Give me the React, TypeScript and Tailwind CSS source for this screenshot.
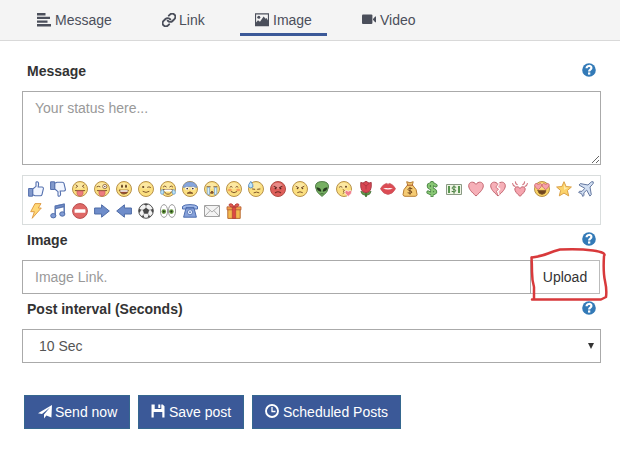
import React from "react";

type Kids = { children?: React.ReactNode };

const Glyph = ({ children }: Kids) => (
  <svg viewBox="0 0 14 14" className="h-[14px] w-[14px] shrink-0" fill="currentColor">{children}</svg>
);

const AlignIcon = () => (
  <Glyph><path d="M0 0h8.5v2.4H0zM0 3.7h13v2.4H0zM0 7.4h10.5v2.4H0zM0 11.1h14v2.4H0z" /></Glyph>
);
const LinkIcon = () => (
  <svg viewBox="1 1 22 22" className="h-[14px] w-[14px] shrink-0" fill="none" stroke="currentColor" strokeWidth="3" strokeLinecap="round" strokeLinejoin="round">
    <path d="M10 13a5 5 0 0 0 7.54.54l3-3a5 5 0 0 0-7.07-7.07l-1.72 1.71" />
    <path d="M14 11a5 5 0 0 0-7.54-.54l-3 3a5 5 0 0 0 7.07 7.07l1.71-1.71" />
  </svg>
);
const PictureIcon = () => (
  <Glyph>
    <path fillRule="evenodd" d="M0 .2h14v13H0zM1.1 1.4v10.6h11.8V1.4z" />
    <circle cx="3.8" cy="4.2" r="1.5" />
    <path d="M1 12.4V9.6L3 7.2l2 1.5L8.6 3.6l2 2.2.9-.7L13 7.6v4.8z" />
  </Glyph>
);
const VideoIcon = () => (
  <Glyph><rect x="0" y="1.5" width="10.4" height="9.5" rx="1" /><path d="M11 6 13.2 3.4h.8v5.8h-.8L11 6.7z" /></Glyph>
);
const SendIcon = () => (
  <Glyph><path d="M14 0 13.4 12.6 8.4 10.4 6 13.5V9.5L12 2.6 4 8.9 0 8.2z" /></Glyph>
);
const SaveIcon = () => (
  <Glyph><path fillRule="evenodd" d="M.5.5h3.2V5h6.6V.5h1.4l1.8 1.8v11.2h-2.2V8H2.7v5.5H.5zM7.3.5h2v3.4h-2z" /></Glyph>
);
const ClockIcon = () => (
  <Glyph>
    <circle cx="7" cy="7" r="6" fill="none" stroke="currentColor" strokeWidth="1.9" />
    <path d="M7 3v4.5h3.5" fill="none" stroke="currentColor" strokeWidth="1.3" />
  </Glyph>
);
const HelpIcon = () => (
  <svg viewBox="0 0 14 14" className="mb-[3px] mr-[5px] h-[14px] w-[14px]">
    <circle cx="7" cy="7" r="6.8" fill="#337ab7" />
    <path d="M4.6 5.3C4.6 2.2 9.5 2.3 9.4 5 9.4 6.7 7.1 6.5 7.1 8.6" fill="none" stroke="#fff" strokeWidth="2.2" />
    <path d="M6 9.4h2.3v2.2H6z" fill="#fff" />
  </svg>
);

const E = ({ children }: Kids) => <svg viewBox="0 0 16 16" className="h-4 w-4">{children}</svg>;

type FaceProps = Kids & { fill?: string; edge?: string };
const Face = ({ children, fill = "#fbdf80", edge = "#b8924c" }: FaceProps) => (
  <E>
    <circle cx="8" cy="8" r="7.5" fill={fill} stroke={edge} />
    <ellipse cx="7.5" cy="4.8" rx="5" ry="3" fill="#fff" opacity=".28" />
    {children}
  </E>
);
type LineProps = { d: string; c?: string; w?: number; f?: string };
const L = ({ d, c = "#80572c", w = 1, f = "none" }: LineProps) => (
  <path d={d} fill={f} stroke={c} strokeWidth={w} strokeLinecap="round" strokeLinejoin="round" />
);
const Thumb = () => (
  <>
    <path d="M.6 7.5h4v7.7h-4z" fill="#8199cc" stroke="#5470ae" />
    <path d="M4.8 8 8 5.3V1.8Q8 .6 9.3.8q1.4.3 1.3 2.1L10.2 6h4q1.4.3 1.2 1.7L14 13.6q-.4 1.2-1.6 1.2H7l-2.2-1z" fill="#f2f6ff" stroke="#5470ae" strokeWidth="1.1" />
  </>
);
const Heart = () => (
  <path d="M8 15C3.5 11 .7 8 .7 4.8.7.5 6 0 8 3.4 10 0 15.3.5 15.3 4.8 15.3 8 12.5 11 8 15z" fill="#f6b0b8" stroke="#c2656f" />
);
const Arrow = () => (
  <path d="M.6 5h7V1.8L15.3 8l-7.7 6.2V11h-7z" fill="#6f8dca" stroke="#4f6ca6" />
);
const Tongue = () => (
  <path d="M5 10h6v2.8q-.4 2.4-3 2.4t-3-2.4z" fill="#ee7b80" stroke="#c45f5c" strokeWidth=".7" />
);

const Emojis = () => (
  <div className="mt-[10px] flex h-[50px] flex-wrap content-start gap-[6px] border border-[#d9dddd] pl-[5px] pt-[5px]">
    <E><Thumb /></E>
    <E><g transform="translate(0 16) scale(1 -1)"><Thumb /></g></E>
    <Face><L d="m4 4 1.7 1.3L4 6.5M12 4l-1.7 1.3L12 6.5M3.3 9.6h9.4" /><Tongue /></Face>
    <Face><L d="M3 5.7q1.5-1 3 0M3.3 9.6h9.4" /><Tongue /><circle cx="10.8" cy="5.5" r="2.1" fill="#fff" stroke="#80572c" strokeWidth=".8" /><circle cx="10.8" cy="5.5" r=".8" fill="#80572c" /></Face>
    <Face><ellipse cx="6" cy="5.3" rx=".9" ry="1.7" fill="#65401d" /><ellipse cx="10" cy="5.3" rx=".9" ry="1.7" fill="#65401d" /><L d="M3.7 9.2h8.6q-.6 3.8-4.3 3.8T3.7 9.2z" f="#9a4934" /><L d="M4.8 10h6.4" c="#fff" w={1.4} /></Face>
    <Face><circle cx="5.2" cy="6" r="1.1" fill="#65401d" /><L d="M9.5 6.2q1.5-1 3 .2M5 10.5q3 2 6 0" /></Face>
    <Face><L d="M3.3 5.8q1.5-2 3 0M9.7 5.8q1.5-2 3 0M3.7 8.5h8.6q-1 4.7-4.3 4.7T3.7 8.5z" /><L d="M5 9.5h6" c="#fff" w={1.9} /><L d="M1.6 8.8Q-.7 13 2 13.2T3.5 9.5zM14.4 8.8q2.3 4.2-.4 4.4T12.5 9.5z" f="#bde3f6" c="#6b9dcc" w={0.8} /></Face>
    <Face><path d="M1 6.4Q2 .9 8 .9t7 5.5Q8 4.6 1 6.4z" fill="#86a5dc" stroke="#6486c2" strokeWidth=".6" /><circle cx="5" cy="7.5" r="1.7" fill="#fff" /><circle cx="11" cy="7.5" r="1.7" fill="#fff" /><circle cx="5.2" cy="7.6" r=".9" fill="#4b3830" /><circle cx="10.8" cy="7.6" r=".9" fill="#4b3830" /><L d="M5.5 12q2.5-2.4 5 0z" f="#98563a" /></Face>
    <Face><L d="M3 5.8h3.2M9.8 5.8H13" /><path d="M3.2 6.6h2.4v7.5L3.2 13zM10.4 6.6h2.4V13l-2.4 1.1z" fill="#d6effc" stroke="#6d9ac8" strokeWidth=".7" /><L d="M6.9 11q1.1-1.8 2.2 0v1.2H6.9z" f="#8a4b35" /></Face>
    <Face><ellipse cx="3.8" cy="9" rx="2" ry="1.3" fill="#f4a060" /><ellipse cx="12.2" cy="9" rx="2" ry="1.3" fill="#f4a060" /><L d="M4 6q1.1-1.5 2.2 0M9.8 6Q10.900 4.500 12 6M5.200 10.700q2.800 2.400 5.600 0" /></Face>
    <Face><L d="m4.500 8 2.200.300M9.600 8.300 12 8M6 11.700q2.500-1.400 5 0" /><path d="M2.800.4Q-.4 4.200.7 6q2 2 4.200 0Q5.600 3.800 2.800.4z" fill="#bde4fb" stroke="#5689bd" strokeWidth=".9" /></Face>
    <Face fill="#df5f5a" edge="#b04d46"><L d="m4 5.300 2.600 1.400M12 5.300 9.400 6.700M5.400 11.700q2.600-1.800 5.200 0" c="#742d27" w={1.1} /><circle cx="5.500" cy="7.400" r=".9" fill="#54211d" /><circle cx="10.500" cy="7.400" r=".9" fill="#54211d" /></Face>
    <Face><L d="m4 5.300 2.600 1.400M12 5.300 9.400 6.700M5.600 11.500q2.400-1.600 4.800 0" /><circle cx="5.500" cy="7.400" r=".8" fill="#65401d" /><circle cx="10.500" cy="7.400" r=".8" fill="#65401d" /></Face>
    <E><path d="M8 .6q6.800 0 6.500 5.500Q14 11.600 8 15.400 2 11.600 1.500 6.100 1.200.6 8 .6z" fill="#77b063" stroke="#527e48" /><path d="M2.500 6.200q5 .4 4.700 4.600-4.200-.6-4.700-4.600zM13.500 6.200q-5 .4-4.700 4.600 4.200-.6 4.700-4.600z" fill="#26391f" /><L d="M6.800 12.800h2.400" c="#315728" w={0.8} /></E>
    <Face><L d="M3.400 6q1.300-1.200 2.600 0" /><circle cx="10" cy="5.700" r="1" fill="#65401d" /><L d="m7 8.500 1.500 1L7 10.500l1.500 1L7 12.500" w={0.8} /><path d="M12.300 15.400C9.300 13 8.600 12 9 10.300q1.400-1.800 3.300 0 1.900-1.800 3.500 0 .4 2-3.500 5.100z" fill="#f17f8c" stroke="#fff" strokeWidth=".7" /></Face>
    <E><L d="M8 8v7.300" c="#487c36" w={1.800} /><path d="M8 14.500Q3.400 14 2.800 10.500 7 10 8 14.500zm0 0q4.500-.5 5.100-4Q9 10 8 14.500z" fill="#67984d" stroke="#416c31" strokeWidth=".7" /><path d="m2.800 1.400 2.200.7L8 .3l3 1.800 2.200-.7q1 10-5.200 10.200-6.200-.2-5.200-10.200z" fill="#d94653" stroke="#a63b45" /><L d="M5.200 2.700 8 5l2.800-2.300M8 5v3" c="#a8343f" w={0.800} /></E>
    <E><path d="M.4 7.700Q3 3.200 6.300 2.400q1 0 1.700 1 .8-1 1.800-1Q13 3.200 15.600 7.700q-3 5.700-7.600 5.700T.4 7.700z" fill="#dc4b54" stroke="#c5545c" strokeWidth=".7" /><path d="M3 7.600q2.500-1 5-.4 2.500-.6 5 .4Q8 9.300 3 7.600z" fill="#fff" /></E>
    <E><path d="M4.700.7 8 1.800 11.200.7 10.400 4q5 4.300 4.700 9.700-.3 1.600-2 1.600H3q-1.700 0-2-1.600Q.7 8.300 5.600 4z" fill="#f5cb73" stroke="#b67d35" /><L d="M5.400 4.200h5.200" c="#a95b32" /><L d="M10 7.600q-3.800-1.400-4 .8c0 1.800 4 1 4 2.800q-.8 2-4 .7M8 6.300v7" c="#74491e" w={1} /></E>
    <E><L d="M11.800 4.600Q8 1.400 4.800 4c-1.800 4.200 7.200 3.600 6.600 7.300Q8.600 14 4.200 11.200M8 1.600v12.800" c="#4c8646" w={3.600} /><L d="M11.800 4.600Q8 1.400 4.800 4c-1.800 4.200 7.200 3.600 6.600 7.300Q8.600 14 4.200 11.200M8 1.600v12.800" c="#89c875" w={1.900} /></E>
    <E><path d="M.5 3.500h15v10H.5z" fill="#eef4e4" stroke="#8a9a84" /><path d="M2 5h2v7H2zm10 0h2v7h-2z" fill="#5a9650" /><L d="M9.800 6.200Q6 4.800 6.200 7.300C6.300 9 10 8 9.900 9.800Q9 11.700 6 10.500M8 4.700v7.600" c="#477d3f" w={1} /></E>
    <E><Heart /></E>
    <E><Heart /><L d="M9 2.500 7 6l2.700 2-2 2.400 1 3.100" c="#fff" w={1.500} /><L d="M8 3.200 5.800 6.200l2.600 1.900-2 2.400L8 14.500" c="#c2656f" w={0.700} /></E>
    <E><path d="M8 15.300C5 12.800 2.800 10.300 2.800 8c.3-2.700 4-2.900 5.200-.5 1.200-2.400 4.900-2.200 5.200.5 0 2.300-2.200 4.800-5.200 7.300z" fill="#f6a5af" stroke="#c2656f" /><L d="M.6 2.500Q1 5 3 5.300M3.400.8Q3.400 3 5.200 3.600M15.400 2.500Q15 5 13 5.300M12.600.8q0 2.200-1.800 2.800" c="#d07780" w={1.200} /></E>
    <Face fill="#f8d264"><path d="M4.300 8.700C1.800 6.700.4 5.700.6 3.700q1.200-2.600 3.700-.3Q6.800 1.300 7.800 3.700q0 2.300-3.500 5zM11.700 8.700C9.200 6.700 8 5.700 8.200 3.700q1-2.400 3.500-.3 2.500-2.100 3.700.3 0 2.300-3.700 5z" fill="#f6a1aa" stroke="#c9646b" strokeWidth=".8" /><L d="M4 9.700h8q-.7 3.600-4 3.600t-4-3.600z" f="#70451c" /></Face>
    <E><path d="m8 .7 2.100 4.800 5.300.5-4 3.500 1.300 5.400L8 12.100l-4.700 2.800 1.300-5.400L.6 6l5.300-.5z" fill="#fbd36b" stroke="#dba148" /><path d="m8 3 1.200 3.500 3 .3L8 9z" fill="#ffebac" /></E>
    <E><path d="M15.200.8q-1.400-.7-3 1L10 4 2.300 2.600 1 4l5.800 3.300L4 10.400l-2.300-.2-1.100 1.200 2.900 1.300 1.400 2.800L6 14.200l-.2-2.300 2.900-2.800 3.200 6 1.400-1.400L12 6l2.200-2.200q1.700-1.600 1-3z" fill="#d2dff2" stroke="#6578a0" /></E>
    <E><path d="M7 .6h6L10.300 5h3L4.200 15.300 6.400 8.700H2.700z" fill="#ffd877" stroke="#dc963c" strokeWidth=".9" /></E>
    <E><path d="M5 2.500 14.500.6v3L5 5.500z" fill="#819cd5" /><L d="M5.200 12.200V3.200l9-2v9M5.500 5.600l8.500-2" c="#5c78b2" w={1.500} /><ellipse cx="3.300" cy="12.700" rx="2.600" ry="2.200" fill="#819cd5" stroke="#516ea9" /><ellipse cx="12.300" cy="11" rx="2.600" ry="2.200" fill="#819cd5" stroke="#516ea9" /></E>
    <E><circle cx="8" cy="8" r="7.400" fill="#df6967" stroke="#b94e4e" /><rect x="2.600" y="6.200" width="10.800" height="3.600" rx=".5" fill="#fff" /></E>
    <E><Arrow /></E>
    <E><g transform="translate(16 0) scale(-1 1)"><Arrow /></g></E>
    <E><circle cx="8" cy="8" r="7.300" fill="#f2f2f2" stroke="#555" /><path d="m8 4.800 3.200 2.300-1.200 3.700H6L4.800 7.100zM5.400.9h5.200L8 2.800zM1 5.400l2.200 1.400L1.600 10 .7 8zM15 5.400l-2.200 1.400 1.600 3.200.9-2zM3 13l2.700-.8.7 2.900zM13 13l-2.700-.8-.7 2.900z" fill="#484848" /><L d="M8 2.500v2.300M3 6.800l1.800.3M13 6.800l-1.800.3M6 10.800l-.7 1.700M10 10.800l.7 1.700" c="#888" w={0.700} /></E>
    <E><ellipse cx="4" cy="8" rx="3.600" ry="6.400" fill="#fff" stroke="#999" /><ellipse cx="12" cy="8" rx="3.600" ry="6.400" fill="#fff" stroke="#999" /><circle cx="3.800" cy="8.600" r="2.300" fill="#66983e" /><circle cx="11.400" cy="8.600" r="2.300" fill="#66983e" /><circle cx="3.800" cy="8.600" r="1" fill="#20331a" /><circle cx="11.400" cy="8.600" r="1" fill="#20331a" /></E>
    <E><path d="M4 5h8l2.400 9.200H1.600z" fill="#86a1da" stroke="#4c6cae" /><path d="M.5 6V3.500Q2 1.600 8 1.600t7.500 1.900V6H12V4.400H4V6z" fill="#a3bbea" stroke="#4c6cae" /><circle cx="8" cy="9.200" r="2.600" fill="#e5efff" stroke="#5c79b6" /><circle cx="8" cy="9.200" r=".9" fill="#5c79b6" /></E>
    <E><path d="M.5 2.500h15v11H.5z" fill="#f4f4f4" stroke="#a0a0a0" /><path d="m1 3 7 6 7-6M1 13l5.200-5.500M15 13 9.800 7.500" fill="none" stroke="#999" strokeWidth=".8" /></E>
    <E><path d="M1.800 6h12.400v9.400H1.800z" fill="#f2b94e" stroke="#b86b32" /><path d="M1 3.800h14v3H1z" fill="#f0a04a" stroke="#b55a36" strokeWidth=".8" /><path d="M6.300 4h3.400v11.400H6.300z" fill="#dc4941" stroke="#a93935" strokeWidth=".6" /><path d="M8 4Q2.800 4.500 3.200 1.300 6.300-.4 8 4 9.700-.4 12.800 1.300 13.200 4.500 8 4z" fill="#e4584f" stroke="#b43f39" /></E>
  </div>
);

const tab = "flex h-[36px] items-center gap-1 border-b-[3px] px-[15px] pt-[7px]";
const Label = ({ children }: Kids) => (
  <div className="flex items-center justify-between pl-[5px] font-bold text-[#333]">
    <span>{children}</span><HelpIcon />
  </div>
);
const button = "flex h-[34px] items-center gap-[3px] border border-[#35678f] bg-[#3b5998] text-white";

export default function App() {
  return (
    <div className="relative h-[455px] w-[620px] overflow-hidden bg-white font-['Liberation_Sans',Arial,sans-serif] text-[14px] leading-5">
      <nav className="flex h-[41px] gap-5 border-b border-[#d9d9d9] bg-[#f4f4f4] pl-[22px] text-[#4b4f5b]">
        <div className={`${tab} w-[105px] border-transparent`}><AlignIcon />Message</div>
        <div className={`${tab} w-[73px] border-transparent`}><LinkIcon /><span className="-ml-px">Link</span></div>
        <div className={`${tab} w-[87px] border-[#3b5998]`}><PictureIcon />Image</div>
        <div className={`${tab} border-transparent`}><VideoIcon />Video</div>
      </nav>
      <main className="ml-[22px] w-[579px] pt-5">
        <Label>Message</Label>
        <textarea placeholder="Your status here..." className="mt-[10px] block h-[74px] w-full resize-y border border-[#aaa] px-3 py-[6px] placeholder:text-[#999]" />
        <Emojis />
        <div className="pt-[5px]"><Label>Image</Label></div>
        <div className="mt-[10px] flex h-[34px]">
          <input placeholder="Image Link." className="w-[509px] border border-[#aaa] px-3 placeholder:text-[#999]" />
          <button className="w-[69px] border border-l-0 border-[#bbb] text-[#333]">Upload</button>
        </div>
        <div className="pt-[5px]"><Label>Post interval (Seconds)</Label></div>
        <div className="mt-[10px] flex h-[34px] items-center justify-between border border-[#aaa] pl-4 pr-[6px] text-[#555]">
          <span>10 Sec</span>
          <svg viewBox="0 0 6 6" className="h-[6px] w-[6px]" fill="#333"><path d="M0 0h6L3 6z" /></svg>
        </div>
        <div className="ml-[2px] mt-8 flex gap-2">
          <button className={`${button} w-[106px] pl-[13px]`}><SendIcon />Send now</button>
          <button className={`${button} w-[106px] pl-3`}><span className="pb-[3px]"><SaveIcon /></span><span className="pl-[1px]">Save post</span></button>
          <button className={`${button} w-[149px] pl-3`}><span className="pb-[2px]"><ClockIcon /></span><span className="pl-[1px]">Scheduled Posts</span></button>
        </div>
      </main>
      <svg viewBox="0 0 90 60" className="pointer-events-none absolute left-[525px] top-[245px] h-[60px] w-[90px]" fill="none" stroke="#d8393b" strokeWidth="2.5" strokeLinecap="round" strokeLinejoin="round">
        <path d="M7 12.5Q17 11 23 8.500T35 4.500Q54 3.500 68 5.500T79 11Q78 27 80 36T81 52L76 54.500H7M6.500 12.500Q7 19 7 27T9 42V54" />
      </svg>
    </div>
  );
}
